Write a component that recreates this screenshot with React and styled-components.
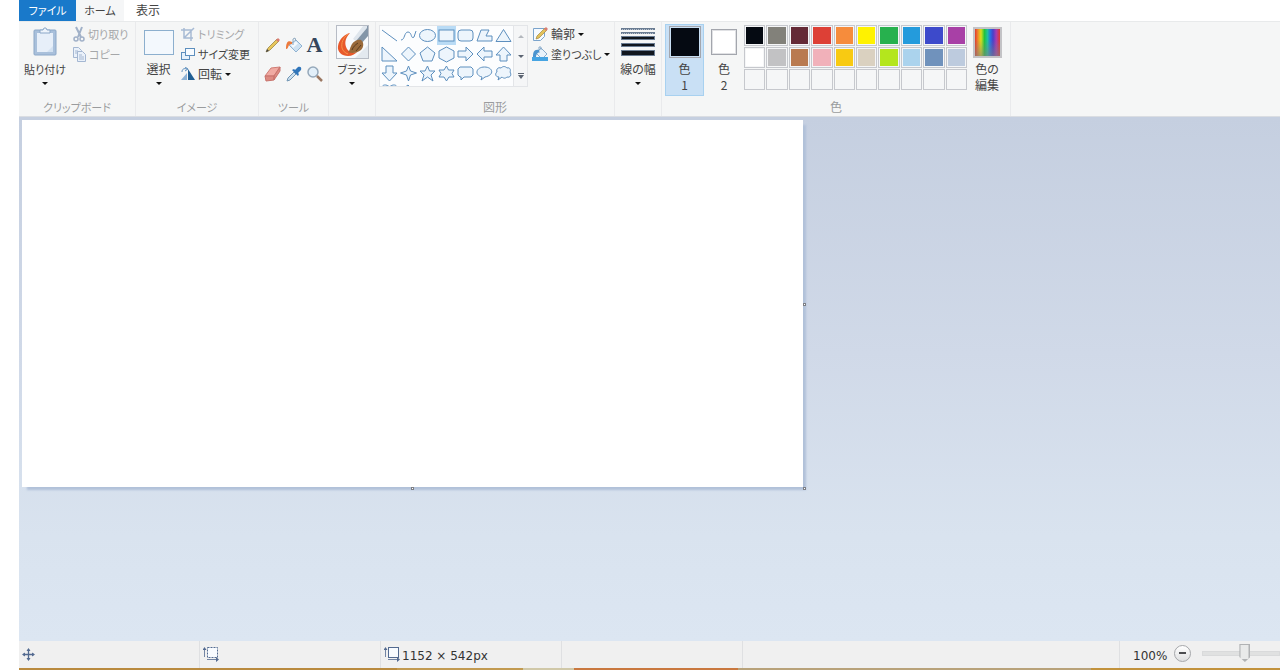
import React, { useState } from "react";
import styled, { createGlobalStyle, css } from "styled-components";

const GlobalStyle = createGlobalStyle`
  * { box-sizing: border-box; }
  body {
    margin: 0;
    background: #ffffff;
    font-family: "Noto Sans CJK JP", "Noto Sans", sans-serif;
    font-feature-settings: "palt";
    font-size: 12px;
    line-height: 16px;
    color: #444444;
  }
  button, input {
    font: inherit;
    font-feature-settings: inherit;
    color: inherit;
  }
  svg { display: block; flex: none; }
`;

const Window = styled.div`
  display: flex;
  flex-direction: column;
  height: 100vh;
  padding-left: 19px;
  overflow: hidden;
`;

const TabBar = styled.nav`
  display: flex;
  flex: none;
  height: 21px;
`;

const plainButton = css`
  margin: 0;
  padding: 0;
  border: 0;
  background: none;
`;

const textSize = css`
  font-size: ${(p) => (p.$kana ? 11 : 12)}px;
`;

const Tab = styled.button`
  ${plainButton}
  ${textSize}
  width: ${(p) => p.$width}px;
  line-height: 20px;
  padding-bottom: 1px;
  background: ${(p) => (p.$kind === "file" ? "#1979ca" : p.$kind === "active" ? "#f5f6f7" : "transparent")};
  color: ${(p) => (p.$kind === "file" ? "#ffffff" : "#444444")};
`;

const Ribbon = styled.div`
  display: flex;
  flex: none;
  height: 96px;
  background: #f5f6f6;
  border-top: 1px solid #e8eaeb;
  border-bottom: 1px solid #dadde2;
`;

const Group = styled.section`
  display: flex;
  flex-direction: column;
  flex: none;
  width: ${(p) => p.$width}px;
  padding-top: 2px;
  border-right: 1px solid #e9eaec;
`;

const GroupBody = styled.div`
  display: flex;
  flex: 1;
  align-items: flex-start;
  padding-left: ${(p) => p.$pad || 0}px;
  gap: ${(p) => p.$gap || 0}px;
`;

const GroupLabel = styled.div`
  ${textSize}
  height: 17px;
  text-align: center;
  color: #9a9c9e;
`;

const BigButton = styled.button`
  ${plainButton}
  ${textSize}
  display: flex;
  flex-direction: column;
  align-items: center;
  width: ${(p) => p.$width}px;
  height: 72px;
  white-space: nowrap;
  border: 1px solid ${(p) => (p.$active ? "#a8d1f0" : "transparent")};
  background: ${(p) => (p.$active ? "#c9e0f5" : "transparent")};
`;

const IconSlot = styled.span`
  display: flex;
  align-items: center;
  justify-content: center;
  height: 36px;
  padding-bottom: 2px;
`;

const Caret = styled.span`
  width: 0;
  border: 3px solid transparent;
  border-top-color: #111111;
  border-bottom-width: 0;
  margin-top: ${(p) => p.$top || 0}px;
`;

const SmallColumn = styled.div`
  display: flex;
  flex-direction: column;
  align-items: flex-start;
`;

const SmallButton = styled.button`
  ${plainButton}
  ${textSize}
  display: flex;
  align-items: center;
  gap: 3px;
  height: 20px;
  white-space: nowrap;
  color: ${(p) => (p.disabled ? "#a5a7a9" : "#444444")};
`;

const ToolGrid = styled.div`
  display: grid;
  grid-template-columns: repeat(3, 21px);
  grid-auto-rows: 29px;
  padding-top: 6px;
`;

const ToolButton = styled.button`
  ${plainButton}
  display: flex;
  align-items: center;
  justify-content: center;
`;

const ShapeBox = styled.div`
  display: flex;
  height: 62px;
  margin-top: 1px;
  background: #fcfdfe;
  border: 1px solid #e3e5e8;
`;

const ShapeGrid = styled.div`
  display: grid;
  grid-template-columns: repeat(7, 19px);
  grid-auto-rows: 19px;
  overflow: hidden;
`;

const ShapeButton = styled.button`
  ${plainButton}
  display: flex;
  align-items: center;
  justify-content: center;
  background: ${(p) => (p.$active ? "#b9dbf5" : "transparent")};
`;

const ShapeScroll = styled.div`
  display: flex;
  flex-direction: column;
  width: 14px;
  background: #f5f6f7;
  border-left: 1px solid #e3e5e8;
`;

const ScrollButton = styled.button`
  ${plainButton}
  display: flex;
  flex: 1;
  align-items: center;
  justify-content: center;
`;

const Swatch = styled.span`
  width: ${(p) => p.$size}px;
  height: ${(p) => p.$size}px;
  border: 1px solid #a3a6ad;
  background: ${(p) => p.$color};
  box-shadow: inset 0 0 0 1px ${(p) => p.$rim};
`;

const Palette = styled.div`
  display: grid;
  grid-template-columns: repeat(10, 1fr);
  grid-auto-rows: 21px;
  gap: 1px;
  width: 223px;
  margin-top: 1px;
`;

const PaletteCell = styled.button`
  ${plainButton}
  border: 1px solid #c6c8cd;
  background: ${(p) => p.$color};
  box-shadow: inset 0 0 0 1px #f5f6f7;
`;

const Spectrum = styled.span`
  width: 29px;
  height: 31px;
  border: 2px solid #c3c3c6;
  background:
    linear-gradient(180deg, transparent 40%, rgba(128, 128, 128, 0.6)),
    linear-gradient(90deg, #e0392f, #f08a2c 12%, #d8e01c 24%, #22c23e 38%, #1fc0a0 50%, #2a6ee0 62%, #4a3fc8 72%, #a83db0 85%, #e0392f);
`;

const Workspace = styled.main`
  flex: 1;
  min-height: 0;
  padding: 3px;
  background: linear-gradient(180deg, #c5cfe0, #d0d9e8 45%, #d9e3ef 80%, #dce6f2);
`;

const Paper = styled.div`
  position: relative;
  width: 62.2%;
  aspect-ratio: 1152 / 542;
  background: #ffffff;
  box-shadow: 4px 4px 2px -1px #b1c1d9;
`;

const Handle = styled.span`
  position: absolute;
  width: 3px;
  height: 3px;
  border: 1px solid #7d7f85;
  background: #ffffff;
  ${(p) => (p.$at === "bottom" ? "left: 50%; bottom: -3px; margin-left: -1px;" : "")}
  ${(p) => (p.$at === "right" ? "right: -3px; top: 50%; margin-top: -1px;" : "")}
  ${(p) => (p.$at === "corner" ? "right: -3px; bottom: -3px;" : "")}
`;

const StatusBar = styled.footer`
  display: flex;
  flex: none;
  height: 27px;
  background: #f0f0f0;
  font-family: "DejaVu Sans", sans-serif;
  color: #333333;
`;

const StatusCell = styled.div`
  display: flex;
  align-items: center;
  flex: ${(p) => (p.$grow ? "1 1 0" : "none")};
  width: 181px;
  gap: 2px;
  padding-left: 3px;
  border-right: 1px solid #dfe0e2;
`;

const StatusText = styled.span`
  padding-top: 2px;
`;

const ZoomCell = styled.div`
  display: flex;
  align-items: center;
  flex: none;
  width: 160px;
  padding-left: 13px;
`;

const ZoomValue = styled.label`
  width: 41px;
  padding-top: 2px;
`;

const ZoomSlider = styled.input`
  appearance: none;
  width: 78px;
  height: 24px;
  margin: 0 0 2px 11px;
  background: transparent;
  &::-webkit-slider-runnable-track {
    height: 5px;
    background: #e0e1e1;
    border: 1px solid #d9dadb;
  }
  &::-webkit-slider-thumb {
    appearance: none;
    width: 11px;
    height: 18px;
    margin-top: -8px;
    clip-path: polygon(0 0, 100% 0, 100% 72%, 50% 100%, 0 72%);
    background: linear-gradient(90deg, #b0b2b4 1px, #e9eaea 2px 9px, #b0b2b4 10px);
    border: solid #b0b2b4;
    border-width: 1px 0 3px;
  }
`;

const Taskbar = styled.div`
  flex: none;
  height: 2px;
  background: linear-gradient(
    90deg, #b98a3e 0 30%, #c29a50 30% 40%, #d0c8a8 40% 44%,
    #c9783f 44% 57%, #b8a27a 57% 85%, #c2923c 85%
  );
`;

const BLUE = "#5d8fbe";

const PasteIcon = () => (
  <svg width="26" height="30" viewBox="0 0 26 30">
    <rect x="2" y="3" width="22" height="25" rx="1" fill="#a9c0db" stroke="#8ca8c8" />
    <rect x="5" y="6" width="16" height="19" fill="#e7eff9" />
    <path d="M8 6V3h3l1-2h2l1 2h3v3z" fill="#eef4fb" stroke="#8ca8c8" />
    <path d="M15 25l6-6v6z" fill="#d3e2f2" />
  </svg>
);

const CutIcon = () => (
  <svg width="12" height="16" viewBox="0 0 12 16" fill="none" stroke="#a1b1c8" strokeWidth="2">
    <path d="M3 1l5 10M9 1L5 11" />
    <circle cx="3" cy="13" r="2" strokeWidth="1.5" />
    <circle cx="9" cy="13" r="2" strokeWidth="1.5" />
  </svg>
);

const CopyIcon = () => (
  <svg width="13" height="16" viewBox="0 0 13 16" fill="#eaf1fa" stroke="#a4b7d2">
    <path d="M.5 1.500h5l3 3v7h-8z" />
    <path d="M4.500 5.500h5l3 3v7h-8z" />
    <path d="M2 5h3M2 7h2M6 9h3M6 11h5M6 13h5" />
  </svg>
);

const SelectIcon = () => (
  <svg width="30" height="25" viewBox="0 0 30 25">
    <rect x=".5" y=".5" width="29" height="24" fill="#f3f8fd" stroke="#b9cfe4" />
    <rect x=".5" y=".5" width="29" height="24" fill="none" stroke="#5f8eb8" strokeDasharray="1 1" />
  </svg>
);

const CropIcon = () => (
  <svg width="14" height="14" viewBox="0 0 14 14" fill="none" stroke="#a7bad4" strokeWidth="1.5">
    <path d="M3 1v10h9M0 3h10v11M3 11L13 1" />
  </svg>
);

const ResizeIcon = () => (
  <svg width="14" height="14" viewBox="0 0 14 14" stroke={BLUE}>
    <rect x=".5" y="5.500" width="8" height="7" fill="#e6f1fb" />
    <rect x="4.500" y="1.500" width="9" height="7" fill="#f7fbff" />
  </svg>
);

const RotateIcon = () => (
  <svg width="14" height="14" viewBox="0 0 14 14">
    <path d="M0 13h6V6z" fill="#8db2d6" />
    <path d="M7 2v11h7z" fill="#205f94" />
    <path d="M1 5c0-3 2-4 5-3M4 0l3 2-3 2" fill="none" stroke={BLUE} />
  </svg>
);

const PencilIcon = () => (
  <svg width="16" height="16" viewBox="0 0 16 16">
    <path d="M1 15l2-4L12 2l2 2-9 9z" fill="#e8c75c" stroke="#9b8746" strokeWidth=".8" />
    <path d="M11 3l2-2 2 2-2 2z" fill="#d97c72" />
    <path d="M1 15l1-3 2 2z" fill="#444" />
  </svg>
);

const BucketIcon = () => (
  <svg width="18" height="16" viewBox="0 0 18 16">
    <path d="M4 8l7-5 6 6-6 6z" fill="#cfe2f2" stroke="#8fb3d2" />
    <path d="M6 8l5-3.500 2 2L8 11z" fill="#f4f9fd" />
    <path d="M8 8V2l2-1 1 3" fill="none" stroke="#8fa9bf" />
    <path d="M7 5C3 3 1 5 1 12c2 0 2-2 3-4 1-1 2-1 3-1z" fill="#ed7a3c" />
  </svg>
);

const LetterIcon = styled.span`
  font-family: "Liberation Serif", serif;
  font-size: 22px;
  font-weight: bold;
  line-height: 22px;
  color: #34465c;
`;

const EraserIcon = () => (
  <svg width="17" height="16" viewBox="0 0 17 16">
    <path d="M1 10l6-8 9-1-6 9z" fill="#f0aaa2" stroke="#cf7d75" />
    <path d="M1 10l9 0v4l-8 1zM10 10l6-9v4l-6 9z" fill="#dd8b82" stroke="#c8736c" />
  </svg>
);

const PickerIcon = () => (
  <svg width="16" height="16" viewBox="0 0 16 16">
    <path d="M1 15l1-3 6-6 2 2-6 6z" fill="#cbdfee" stroke="#7296b4" />
    <path d="M6 4l6 6 1-2-1-1 3-3c1-3-1-4-3-3L9 4 8 3z" fill="#2f75ba" />
  </svg>
);

const MagnifierIcon = () => (
  <svg width="16" height="16" viewBox="0 0 16 16">
    <circle cx="6" cy="6" r="5" fill="#e2eff9" stroke="#95a8ba" strokeWidth="1.500" />
    <path d="M10 10l5 5" stroke="#9b7862" strokeWidth="2.500" />
  </svg>
);

const BrushIcon = () => (
  <svg width="33" height="34" viewBox="0 0 33 34">
    <rect x=".5" y=".5" width="32" height="33" fill="#f8fafc" stroke="#b7bcc5" />
    <path d="M32 33V20L19 33z" fill="#e3e9ef" />
    <path d="M28 1h4v10l-7 8-7-5z" fill="#8496a8" />
    <path d="M27 1L17 14l3 2L31 3V1z" fill="#dfe6ed" />
    <path d="M14 8C9 9 3 14 2 21c-1 6 4 10 10 10 4 0 7-2 9-4-4 1-8 0-10-3-3-5-2-11 3-16z" fill="#e8592b" />
    <path d="M12 9c-5 4-7 9-6 14 1 3 3 5 6 6" fill="none" stroke="#f59348" />
    <path d="M12 27c2-1 2-5 4-8 2-3 6-5 9-4 3 2 3 7 0 10-4 3-9 4-13 2z" fill="#9a6a3a" />
    <path d="M16 25c1-3 3-5 6-7M20 26l5-6" stroke="#5c3d20" fill="none" />
  </svg>
);

const OutlineIcon = () => (
  <svg width="16" height="16" viewBox="0 0 16 16">
    <path d="M1.500 2.500h11v8l-4 4h-7z" fill="#f5faff" stroke="#7ba4cc" />
    <path d="M4 13l1-3 8-8 2 2-8 8z" fill="#e3c25a" stroke="#a28840" strokeWidth=".7" />
    <path d="M12 3l2-2 2 2-2 2z" fill="#d97c72" />
  </svg>
);

const FillIcon = () => (
  <svg width="16" height="16" viewBox="0 0 16 16">
    <path d="M4 7l5-5 6 6-5 5z" fill="#e9f2fa" stroke="#8aaccb" />
    <path d="M7 7V1h2v3" fill="none" stroke="#8aaccb" />
    <path d="M7 4C2 3 1 6 1 11h3c0-2 1-4 3-5z" fill="#4b94cf" />
    <path d="M0 11h16v4H0z" fill="#46a4e2" />
  </svg>
);

const LinesIcon = () => (
  <svg width="34" height="29" viewBox="0 0 34 29">
    <path d="M0 0h34v2H0zM0 4h34v2H0zM0 8h34v4H0zM0 15h34v4H0zM0 22h34v6H0z" fill="#6a7c92" />
    <path d="M1 9h32v2H1zM1 16h32v2H1zM1 23h32v4H1z" fill="#10161e" />
    <path d="M1 1.500h32M1 5.500h32" stroke="#b5c0cd" strokeDasharray="1 1" />
  </svg>
);

const shapes = [
  ["直線", <path d="M1 2l15 11" />],
  ["曲線", <path d="M1 12C5 12 4 4 8 4s3 8 6 5l2-6" fill="none" />],
  ["楕円", <ellipse cx="8.500" cy="7.500" rx="8" ry="6" />],
  ["四角形", <rect x="1" y="2" width="15" height="11" />],
  ["角丸四角形", <rect x="1" y="2" width="15" height="11" rx="3" />],
  ["多角形", <path d="M5 2h8l-3 6h6v5H1z" />],
  ["三角形", <path d="M8.500 1.500l7.500 12H1z" />],
  ["直角三角形", <path d="M1 0v14h15z" />],
  ["ひし形", <path d="M8.500 0l7 7-7 7-7-7z" />],
  ["五角形", <path d="M8.500 0l7.500 6-3 8H4L1 6z" />],
  ["六角形", <path d="M8.500 0L16 4v7l-7.500 4L1 11V4z" />],
  ["右矢印", <path d="M1 4h8V0l7 7-7 7v-4H1z" />],
  ["左矢印", <path d="M16 4H8V0L1 7l7 7v-4h8z" />],
  ["上矢印", <path d="M5 14V8H1l7.500-8L16 8h-4v6z" />],
  ["下矢印", <path d="M5 0v7H1l7.500 8L16 7h-4V0z" />],
  ["星 4", <path d="M8.500 0l2 5 6 2-6 2-2 6-2-6-6-2 6-2z" />],
  ["星 5", <path d="M8.500 0l2 5H16l-4 4 2 6-5.500-4L3 15l2-6-4-4h5z" />],
  ["星 6", <path d="M8.500 0l2 4H16l-2 3.500 2 3.500h-5l-2.500 4L6 11H1l2-3.500L1 4h5z" />],
  ["吹き出し 角丸", <path d="M3 1h11l2 2v6l-2 2H7l-3 3v-3H3L1 9V3z" />],
  ["吹き出し 楕円", <path d="M6 11C-2 9 0 1 8.500 1S19 9 9 11l-4 3z" />],
  ["吹き出し 雲", <path d="M4 11C0 11 0 7 2 6c-1-3 1-5 4-4 2-2 4-2 6 0 3-1 4 2 3 4 2 3 0 6-3 5-2 2-4 1-5 0l-4 3z" />],
  ["ハート", <path d="M8.500 2C6-1 0-1 1 4c1 4 7 9 7.500 9S15 8 16 4c1-5-5-5-7.500-2z" />],
  ["稲妻", <path d="M8 0l4 4-1 1 5 8-9-6 1-1-4-3z" />],
];

const colors = [
  ["黒", "#050a12"], ["50% 灰色", "#82817a"], ["暗い赤", "#642a36"], ["赤", "#dd4036"], ["オレンジ", "#f68c3c"],
  ["黄", "#fff200"], ["緑", "#27b14e"], ["青緑", "#249bdc"], ["藍色", "#3d4acb"], ["紫", "#a840a6"],
  ["白", "#ffffff"], ["25% 灰色", "#c2c2c4"], ["茶", "#b97a50"], ["ローズ", "#f1b1ba"], ["ゴールド", "#f8ca12"],
  ["薄い黄", "#dad1c0"], ["ライム", "#b4e61d"], ["薄い青緑", "#abd3ed"], ["青灰色", "#7092bc"], ["ラベンダー", "#bdcbde"],
  ...Array.from({ length: 10 }, (_, i) => [`カスタム ${i + 1}`, "#f5f6f7"]),
];

const MoveIcon = () => (
  <svg width="13" height="13" viewBox="0 0 13 13" fill="#536a90" stroke="#536a90">
    <path d="M6.500 1v11M1 6.500h11" fill="none" strokeWidth="1.3" />
    <path d="M6.500 0l2 3h-4zM6.500 13l2-3h-4zM0 6.500l3-2v4zM13 6.500l-3-2v4z" stroke="none" />
  </svg>
);

const SizeIcon = ({ dashed }) => (
  <svg width="16" height="15" viewBox="0 0 16 15" fill="none" stroke="#536a90">
    <rect x="4.500" y=".5" width="10" height="10" fill="#f8fbff" strokeDasharray={dashed ? "2 1" : undefined} />
    <path d="M1.500 10V2M4 12.500h10" strokeWidth=".8" />
    <path d="M1.500 0l2 3h-4zM13 10l3 2.500-3 2.500z" fill="#536a90" stroke="none" />
  </svg>
);

const ZoomOutButton = styled.button`
  ${plainButton}
  display: flex;
  align-items: center;
  justify-content: center;
  width: 17px;
  height: 17px;
  margin-bottom: 3px;
  border: 1px solid #a5a7aa;
  border-radius: 50%;
  background: linear-gradient(#ffffff, #dfe0e1);
  &::before {
    content: "";
    width: 7px;
    height: 2px;
    background: #4c4d50;
  }
`;

export default function App() {
  const [shape, setShape] = useState(3);
  const [color, setColor] = useState("#050a12");
  const [zoom, setZoom] = useState(56);

  return (
    <>
      <GlobalStyle />
      <Window>
        <TabBar>
          <Tab $width={57} $kind="file" $kana>ファイル</Tab>
          <Tab $width={48} $kind="active" $kana>ホーム</Tab>
          <Tab $width={48}>表示</Tab>
        </TabBar>

        <Ribbon>
          <Group $width={117}>
            <GroupBody $gap={2}>
              <BigButton $width={52} $kana>
                <IconSlot><PasteIcon /></IconSlot>
                貼り付け
                <Caret $top={5} />
              </BigButton>
              <SmallColumn>
                <SmallButton disabled $kana><CutIcon />切り取り</SmallButton>
                <SmallButton disabled $kana><CopyIcon />コピー</SmallButton>
              </SmallColumn>
            </GroupBody>
            <GroupLabel $kana>クリップボード</GroupLabel>
          </Group>

          <Group $width={123}>
            <GroupBody $pad={2} $gap={2}>
              <BigButton $width={41}>
                <IconSlot><SelectIcon /></IconSlot>
                選択
                <Caret $top={5} />
              </BigButton>
              <SmallColumn>
                <SmallButton disabled $kana><CropIcon />トリミング</SmallButton>
                <SmallButton $kana><ResizeIcon />サイズ変更</SmallButton>
                <SmallButton><RotateIcon />回転<Caret /></SmallButton>
              </SmallColumn>
            </GroupBody>
            <GroupLabel $kana>イメージ</GroupLabel>
          </Group>

          <Group $width={70}>
            <GroupBody $pad={3}>
              <ToolGrid>
                <ToolButton aria-label="鉛筆"><PencilIcon /></ToolButton>
                <ToolButton aria-label="塗りつぶし"><BucketIcon /></ToolButton>
                <ToolButton aria-label="テキスト"><LetterIcon>A</LetterIcon></ToolButton>
                <ToolButton aria-label="消しゴム"><EraserIcon /></ToolButton>
                <ToolButton aria-label="色の選択"><PickerIcon /></ToolButton>
                <ToolButton aria-label="拡大鏡"><MagnifierIcon /></ToolButton>
              </ToolGrid>
            </GroupBody>
            <GroupLabel $kana>ツール</GroupLabel>
          </Group>

          <Group $width={47}>
            <GroupBody>
              <BigButton $width={46} $kana>
                <IconSlot><BrushIcon /></IconSlot>
                ブラシ
                <Caret $top={5} />
              </BigButton>
            </GroupBody>
          </Group>

          <Group $width={239}>
            <GroupBody $pad={3} $gap={4}>
              <ShapeBox>
                <ShapeGrid>
                  {shapes.map(([name, drawing], i) => (
                    <ShapeButton key={name} aria-label={name} $active={i === shape} onClick={() => setShape(i)}>
                      <svg width="17" height="17" viewBox="0 -1 17 17" fill="#edf5fc" stroke={BLUE}>{drawing}</svg>
                    </ShapeButton>
                  ))}
                </ShapeGrid>
                <ShapeScroll>
                  <ScrollButton aria-label="上へ">
                    <svg width="6" height="3" viewBox="0 0 6 3"><path d="M0 3l3-3 3 3z" fill="#b4b8be" /></svg>
                  </ScrollButton>
                  <ScrollButton aria-label="下へ">
                    <svg width="6" height="3" viewBox="0 0 6 3"><path d="M0 0h6L3 3z" fill="#5b6472" /></svg>
                  </ScrollButton>
                  <ScrollButton aria-label="その他">
                    <svg width="6" height="6" viewBox="0 0 6 6"><path d="M0 0h6v1H0zM0 2h6L3 6z" fill="#5b6472" /></svg>
                  </ScrollButton>
                </ShapeScroll>
              </ShapeBox>
              <SmallColumn>
                <SmallButton><OutlineIcon />輪郭<Caret /></SmallButton>
                <SmallButton $kana><FillIcon />塗りつぶし<Caret /></SmallButton>
              </SmallColumn>
            </GroupBody>
            <GroupLabel>図形</GroupLabel>
          </Group>

          <Group $width={47}>
            <GroupBody>
              <BigButton $width={46}>
                <IconSlot><LinesIcon /></IconSlot>
                線の幅
                <Caret $top={5} />
              </BigButton>
            </GroupBody>
          </Group>

          <Group $width={349}>
            <GroupBody $pad={3}>
              <BigButton $width={39} $active>
                <IconSlot><Swatch $size={32} $color={color} $rim="#c9e0f5" /></IconSlot>
                <span>色<br />1</span>
              </BigButton>
              <BigButton $width={40}>
                <IconSlot><Swatch $size={26} $color="#ffffff" $rim="#e0e1e4" /></IconSlot>
                <span>色<br />2</span>
              </BigButton>
              <Palette>
                {colors.map(([name, value]) => (
                  <PaletteCell key={name} aria-label={name} $color={value} onClick={() => setColor(value)} />
                ))}
              </Palette>
              <BigButton $width={40}>
                <IconSlot><Spectrum /></IconSlot>
                <span>色の<br />編集</span>
              </BigButton>
            </GroupBody>
            <GroupLabel>色</GroupLabel>
          </Group>
        </Ribbon>

        <Workspace>
          <Paper>
            <Handle $at="bottom" />
            <Handle $at="right" />
            <Handle $at="corner" />
          </Paper>
        </Workspace>

        <StatusBar>
          <StatusCell><MoveIcon /></StatusCell>
          <StatusCell><SizeIcon dashed /></StatusCell>
          <StatusCell><SizeIcon /><StatusText>1152 × 542px</StatusText></StatusCell>
          <StatusCell />
          <StatusCell $grow />
          <ZoomCell>
            <ZoomValue htmlFor="zoom">100%</ZoomValue>
            <ZoomOutButton aria-label="縮小" />
            <ZoomSlider id="zoom" type="range" value={zoom} onChange={(e) => setZoom(Number(e.target.value))} />
          </ZoomCell>
        </StatusBar>
        <Taskbar />
      </Window>
    </>
  );
}
